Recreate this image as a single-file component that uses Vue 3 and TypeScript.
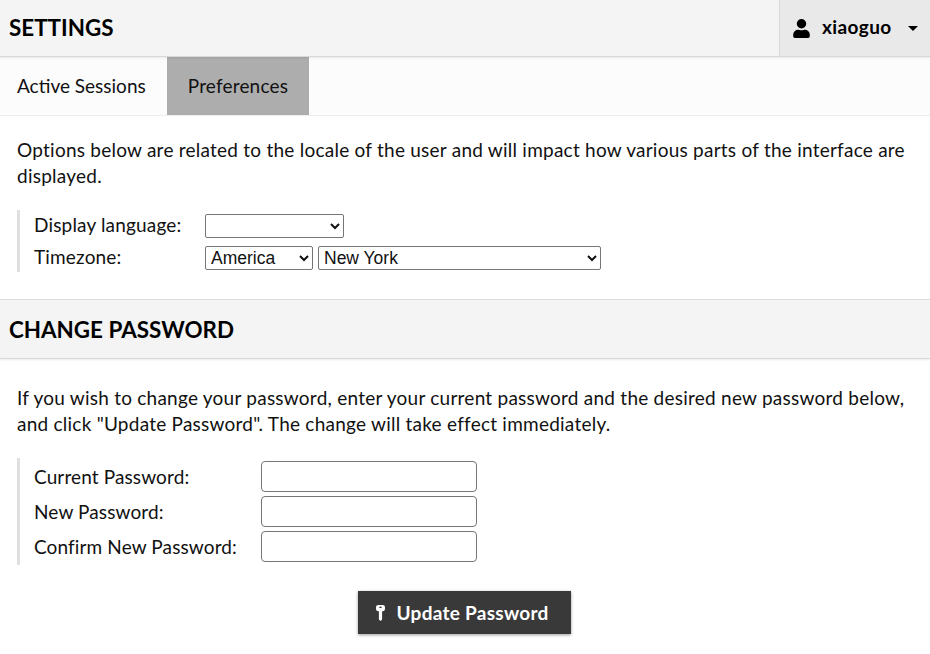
<template>
    <div class="settings-page">
        <header class="page-header">
            <h1 class="page-title">SETTINGS</h1>
            <div class="user-menu">
                <svg class="user-icon" viewBox="0 0 448 512" aria-hidden="true">
                    <path d="M224 256a128 128 0 1 0 0-256 128 128 0 0 0 0 256zm89.6 32h-16.7a174.1 174.1 0 0 1-145.8 0h-16.7A134.4 134.4 0 0 0 0 422.400V464a48 48 0 0 0 48 48h352a48 48 0 0 0 48-48v-41.600A134.400 134.400 0 0 0 313.600 288z" />
                </svg>
                <span class="user-name">xiaoguo</span>
                <span class="caret"></span>
            </div>
        </header>

        <nav class="tabs">
            <a
                v-for="tab in tabs"
                :key="tab"
                class="tab"
                :class="{ active: tab === activeTab }"
                @click="activeTab = tab"
            >{{ tab }}</a>
        </nav>

        <section class="pref-section">
            <p class="intro">Options below are related to the locale of the user and will impact how various parts of the interface are displayed.</p>
            <div class="form-group locale-group">
                <div class="locale-row">
                    <label class="locale-label">Display language:</label>
                    <select class="lang-select"><option></option></select>
                </div>
                <div class="locale-row">
                    <label class="locale-label">Timezone:</label>
                    <select class="region-select"><option>America</option></select>
                    <select class="city-select"><option>New York</option></select>
                </div>
            </div>
        </section>

        <h2 class="section-header">CHANGE PASSWORD</h2>

        <section class="password-section">
            <p class="intro">If you wish to change your password, enter your current password and the desired new password below, and click "Update Password". The change will take effect immediately.</p>
            <div class="form-group password-group">
                <div v-for="field in passwordFields" :key="field" class="password-row">
                    <label class="password-label">{{ field }}:</label>
                    <input class="password-input" type="password" />
                </div>
            </div>
            <div class="actions">
                <button class="update-btn" type="button">
                    <svg class="key-icon" viewBox="0 0 10 18" aria-hidden="true">
                        <path fill-rule="evenodd" d="M2.500 0h5C9 0 10 1 10 2.500v2C10 6 9 7 7.500 7H6.800v9.200L5 18l-1.800-1.800V7H2.500C1 7 0 6 0 4.500v-2C0 1 1 0 2.500 0zM3.700 2v1.400h2.600V2z" />
                    </svg>
                    Update Password
                </button>
            </div>
        </section>
    </div>
</template>

<script setup lang="ts">
import { ref } from 'vue'

const tabs = ['Active Sessions', 'Preferences']
const activeTab = ref('Preferences')
const passwordFields = ['Current Password', 'New Password', 'Confirm New Password']
</script>

<style scoped>
.settings-page {
    width: 930px;
    height: 654px;
    overflow: hidden;
    background: #fff;
    color: #111;
    font-family: Lato, sans-serif;
    font-size: 19px;
    line-height: 26px;
}

/* Header */
.page-header {
    display: flex;
    justify-content: space-between;
    height: 56px;
    background: #f4f4f4;
    border-bottom: 1px solid #d8d8d8;
    box-shadow: 0 1px 2px rgba(0, 0, 0, 0.08);
    position: relative;
}
.page-title, .section-header {
    margin: 0;
    font-size: 22.4px;
    font-weight: 700;
    color: #000;
}
.page-title {
    padding-left: 9px;
    line-height: 55px;
}
.user-menu {
    display: flex;
    align-items: center;
    width: 151px;
    padding-left: 13px;
    box-sizing: border-box;
    background: #e9e9e9;
    border-left: 1px solid #d8d8d8;
}
.user-icon {
    width: 17px;
    height: 19px;
    margin-right: 12px;
}
.user-name {
    font-weight: 700;
    color: #000;
    letter-spacing: 0.4px;
    line-height: 24px;
    margin-bottom: 2px;
}
.caret {
    width: 0;
    height: 0;
    margin-left: 16px;
    border-left: 5px solid transparent;
    border-right: 5px solid transparent;
    border-top: 5px solid #000;
}

/* Tabs */
.tabs {
    display: flex;
    height: 58px;
    background: #fcfcfc;
    border-bottom: 1px solid #eee;
}
.tab {
    padding: 0 21px 0 17px;
    line-height: 58px;
    cursor: pointer;
}
.tab.active {
    padding: 0 21px;
    background: #adadad;
    letter-spacing: 0.18px;
}

/* Sections */
.pref-section {
    padding: 21px 17px 27px;
    height: 183px;
    box-sizing: border-box;
}
.password-section {
    padding: 26px 17px 0;
}
.intro {
    margin: 0;
    letter-spacing: 0.24px;
}
.section-header {
    height: 58px;
    padding-left: 9px;
    line-height: 60px;
    background: #f4f4f4;
    border-top: 1px solid #ddd;
    border-bottom: 1px solid #d8d8d8;
    box-shadow: 0 1px 2px rgba(0, 0, 0, 0.08);
}
.form-group {
    border-left: 3px solid #e0e0e0;
    padding-left: 14px;
}

/* Locale form */
.locale-group {
    margin-top: 21px;
    height: 62px;
}
.locale-row {
    display: flex;
    align-items: center;
    gap: 5px;
    height: 32px;
}
.locale-label {
    width: 166px;
    letter-spacing: 0.17px;
    margin-bottom: 2px;
}
.locale-row select {
    height: 24px;
    padding: 0 0 0 1px;
    background: #fff;
    border: 1px solid #767676;
    border-radius: 2px;
    font-family: "Liberation Sans", Arial, sans-serif;
    font-size: 17.5px;
    color: #111;
}
.lang-select { width: 139px; }
.region-select { width: 108px; }
.city-select { width: 283px; }

/* Password form */
.password-group {
    margin-top: 21px;
    padding-top: 1px;
    padding-bottom: 1px;
}
.password-row {
    display: flex;
    align-items: center;
    height: 35px;
}
.password-label {
    width: 227px;
    letter-spacing: 0.12px;
}
.password-input {
    width: 216px;
    height: 31px;
    box-sizing: border-box;
    background: #fff;
    border: 1px solid #767676;
    border-radius: 4px;
}
.actions {
    display: flex;
    justify-content: center;
    margin-top: 26px;
    padding-right: 2px;
}
.update-btn {
    display: flex;
    align-items: center;
    gap: 12px;
    height: 43px;
    width: 213px;
    padding: 0 0 0 18px;
    background: #393939;
    border: none;
    box-shadow: 0 1px 3px rgba(0, 0, 0, 0.4);
    color: #fff;
    font-family: Lato, sans-serif;
    font-size: 19px;
    font-weight: 700;
    letter-spacing: 0.27px;
    cursor: pointer;
}
.key-icon {
    width: 9px;
    height: 16px;
    fill: #fff;
}
</style>
